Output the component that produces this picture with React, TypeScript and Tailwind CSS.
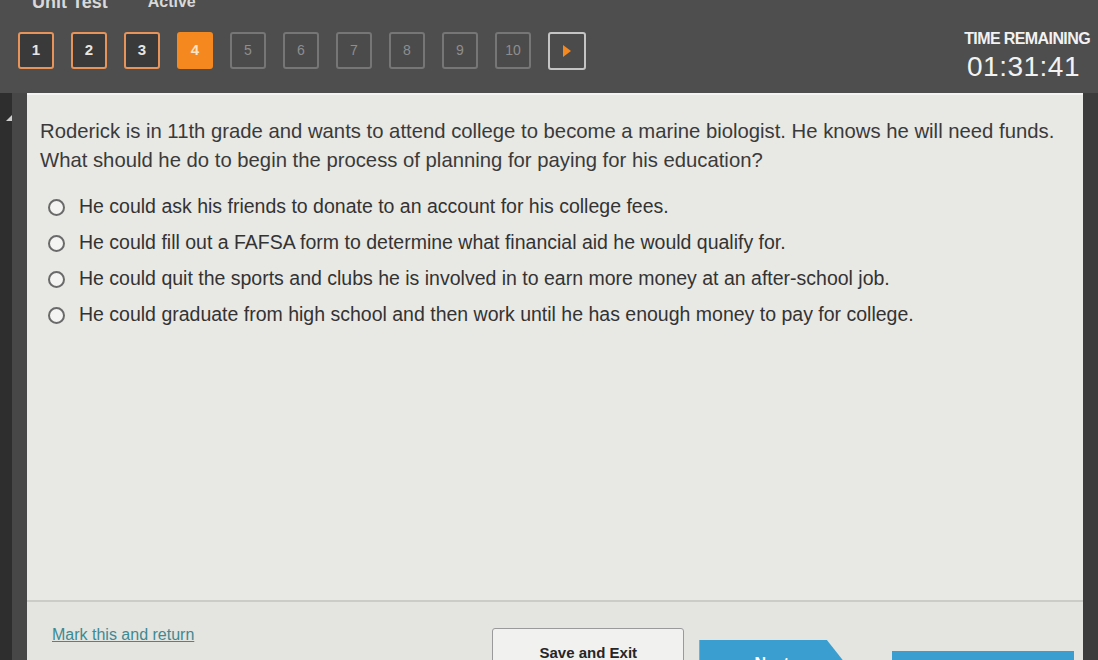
import React from "react";

const font = { fontFamily: '"Liberation Sans", Arial, Helvetica, sans-serif' };

type NavState = "done" | "current" | "todo";

function NavBox({ label, state }: { label: string; state: NavState }) {
  if (state === "current") {
    return (
      <div className="w-[36px] h-[37px] rounded-[3px] bg-[#f5891f] flex items-center justify-center text-[15px] font-bold text-[#fbe3c8]">
        {label}
      </div>
    );
  }
  if (state === "done") {
    return (
      <div className="w-[36px] h-[37px] rounded-[3px] border-2 border-[#e8935a] bg-[#3a3a3a] flex items-center justify-center text-[15px] font-bold text-[#e6e6e6]">
        {label}
      </div>
    );
  }
  return (
    <div className="w-[36px] h-[37px] rounded-[3px] border-2 border-[#767676] bg-[#4b4b4b] flex items-center justify-center text-[14px] text-[#8e8e8e]">
      {label}
    </div>
  );
}

const options = [
  "He could ask his friends to donate to an account for his college fees.",
  "He could fill out a FAFSA form to determine what financial aid he would qualify for.",
  "He could quit the sports and clubs he is involved in to earn more money at an after-school job.",
  "He could graduate from high school and then work until he has enough money to pay for college.",
];

export default function App() {
  const items: { label: string; state: NavState }[] = [
    { label: "1", state: "done" },
    { label: "2", state: "done" },
    { label: "3", state: "done" },
    { label: "4", state: "current" },
    { label: "5", state: "todo" },
    { label: "6", state: "todo" },
    { label: "7", state: "todo" },
    { label: "8", state: "todo" },
    { label: "9", state: "todo" },
    { label: "10", state: "todo" },
  ];

  return (
    <div style={font} className="w-[1098px] h-[660px] overflow-hidden bg-[#4e4e4e] flex flex-col">
      {/* Header */}
      <div className="h-[93px] shrink-0 flex flex-col">
        <div className="h-[12px] overflow-hidden pl-[32px] flex gap-[40px]">
          <span className="text-[18px] font-bold text-[#d9d9d9] leading-none -mt-[7px]">Unit Test</span>
          <span className="text-[16px] font-bold text-[#d9d9d9] leading-none -mt-[6px]">Active</span>
        </div>
        <div className="flex justify-between items-start pt-[20px] pl-[18px] pr-[8px]">
          <div className="flex gap-[17px]">
            {items.map((it) => (
              <NavBox key={it.label} label={it.label} state={it.state} />
            ))}
            <div className="w-[38px] h-[38px] rounded-[3px] border-2 border-[#c4c4c4] bg-[#4b4b4b] flex items-center justify-center">
              <svg width="10" height="12" viewBox="0 0 10 12">
                <polygon points="1,0 9,6 1,12" fill="#f5891f" />
              </svg>
            </div>
          </div>
          <div className="flex flex-col items-end -mt-[2px]">
            <div className="text-[16px] font-bold text-[#f2f2f2] tracking-[-0.6px] leading-[18px]">TIME REMAINING</div>
            <div className="text-[28px] text-[#f2f2f2] leading-[30px] mt-[4px] pr-[10px] tracking-[0.5px]">01:31:41</div>
          </div>
        </div>
      </div>

      {/* Body */}
      <div className="flex-1 flex min-h-0">
        <div className="w-[12px] bg-[#2e2e2e] flex flex-col">
          <div className="h-[22px]" />
          <div className="w-0 h-0 border-l-[6px] border-l-transparent border-b-[6px] border-b-[#cfcfcf] ml-[6px]" />
        </div>
        <div className="w-[15px] bg-[#474747]" />
        <div className="flex-1 bg-[#e8e8e4] flex flex-col border-t-2 border-[#f4f4f2]">
          <div className="flex-1 pt-[22px] pl-[13px] pr-[10px]">
            <p className="text-[20.3px] leading-[29px] text-[#3a3a3a] whitespace-nowrap">
              Roderick is in 11th grade and wants to attend college to become a marine biologist. He knows he will need funds.
              <br />
              What should he do to begin the process of planning for paying for his education?
            </p>
            <div className="mt-[14px] flex flex-col">
              {options.map((o) => (
                <div key={o} className="h-[36px] flex items-center">
                  <div className="w-[17px] h-[17px] rounded-full border-2 border-[#6a6a6a] bg-[#f4f4f2] ml-[8px]" />
                  <span className="ml-[14px] text-[19.5px] text-[#333333] whitespace-nowrap">{o}</span>
                </div>
              ))}
            </div>
          </div>
          <div className="h-[60px] shrink-0 border-t-2 border-[#cbcbc7] bg-[#e4e4e0] flex items-start">
            <a className="mt-[21px] ml-[25px] text-[16px] text-[#3d8a93] underline decoration-[#3d8a93]">
              Mark this and return
            </a>
            <div className="ml-[298px] mt-[26px] w-[192px] h-[40px] rounded-[3px] border border-[#9a9a9a] bg-[#f1f1ef] flex justify-center pt-[13px]">
              <span className="text-[15px] font-semibold text-[#262626]">Save and Exit</span>
            </div>
            <div className="ml-[15px] mt-[38px] w-[145px] h-[40px] bg-[#3a9fd0] [clip-path:polygon(0_0,88%_0,100%_55%,100%_100%,0_100%)] flex justify-center pt-[12px]">
              <span className="text-[16px] font-bold text-white">Next</span>
            </div>
            <div className="ml-[48px] mt-[49px] w-[182px] h-[40px] bg-[#3a9fd0]" />
          </div>
        </div>
        <div className="w-[15px] bg-[#3c3c3c]" />
      </div>
    </div>
  );
}
